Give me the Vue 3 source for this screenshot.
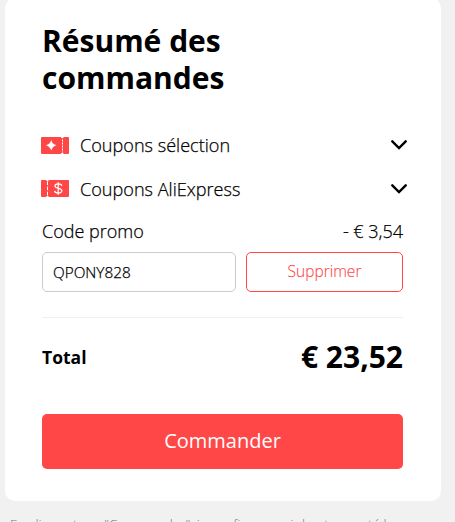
<template>
  <div class="page">
    <section class="summary">
      <h2 class="title">Résumé des commandes</h2>

      <div class="coupon" v-for="coupon in coupons" :key="coupon.id">
        <svg v-if="coupon.id === 'selection'" class="ticket" viewBox="0 0 28 17">
          <path
            class="ticket-body"
            d="M1 0H20a1.3 1.3 0 0 0 2.6 0H27a1 1 0 0 1 1 1V16a1 1 0 0 1-1 1H22.600a1.3 1.3 0 0 0-2.6 0H1a1 1 0 0 1-1-1V1a1 1 0 0 1 1-1z"
          />
          <path class="ticket-cut" d="M21.500 2.500V15.500" />
          <path
            class="ticket-star"
            d="M10.200 3Q11.300 7.200 15.500 8.300Q11.300 9.400 10.200 13.600Q9.100 9.400 4.900 8.300Q9.100 7.200 10.200 3z"
          />
        </svg>
        <svg v-else class="ticket raised" viewBox="0 0 28 17">
          <path
            class="ticket-body"
            d="M1 0H5.300a1.200 1.200 0 0 0 2.400 0H27a1 1 0 0 1 1 1V16a1 1 0 0 1-1 1H7.700a1.200 1.200 0 0 0-2.400 0H1a1 1 0 0 1-1-1V1a1 1 0 0 1 1-1z"
          />
          <path class="ticket-cut long" d="M6.500 1.500V16" />
          <path
            class="ticket-dollar"
            d="M17.200 2.300V14.700M20.700 5.800C20.300 3.400 14 3.200 14 6.100C14 9.100 20.900 7.500 20.900 10.800C20.900 13.900 13.900 13.700 13.600 10.900"
          />
        </svg>
        <span class="coupon-name">{{ coupon.name }}</span>
        <svg class="arrow" :class="{ open: opened === coupon.id }" viewBox="0 0 16 10" @click="toggle(coupon.id)">
          <path d="M1.300 1.300L8 8L14.700 1.300" />
        </svg>
      </div>

      <div class="promo-line">
        <span>Code promo</span>
        <span>- € 3,54</span>
      </div>
      <div class="promo-form">
        <input type="text" v-model="code" />
        <button class="remove" @click="code = ''">Supprimer</button>
      </div>

      <div class="total">
        <span class="total-label">Total</span>
        <span class="total-price">€ 23,52</span>
      </div>
      <button class="order">Commander</button>
    </section>
    <p class="terms">En cliquant sur "Commander", je confirme avoir lu et accepté les</p>
  </div>
</template>

<script setup>
import { ref } from "vue";

const coupons = [
  { id: "selection", name: "Coupons sélection" },
  { id: "aliexpress", name: "Coupons AliExpress" },
];
const code = ref("QPONY828");
const opened = ref(null);

const toggle = (id) => {
  opened.value = opened.value === id ? null : id;
};
</script>

<style>
body {
  background: #f1f1f1;
  overflow: hidden;
}
</style>

<style scoped>
.page {
  box-sizing: border-box;
  height: 522px;
  padding: 0 14px 0 5px;
  overflow: hidden;
  background: #f1f1f1;
  color: #000;
  font-family: "Open Sans", sans-serif;
  font-weight: 300;
}
.summary {
  box-sizing: border-box;
  height: 503px;
  margin-top: -2px;
  padding: 24px 38px 0 37px;
  background: #fff;
  border-radius: 10px;
}
.title {
  width: 240px;
  margin: 0 0 27px;
  font-size: 30px;
  font-weight: 700;
  line-height: 37px;
}
.coupon {
  display: flex;
  align-items: center;
  height: 44px;
  margin: 0 -4px 0 -1px;
  font-size: 18.1px;
}
.coupon-name,
.promo-line,
input,
.remove {
  -webkit-text-stroke: 0.25px currentColor;
}
.remove {
  -webkit-text-stroke-width: 0.15px;
}
.ticket {
  width: 28px;
  height: 17px;
  margin-right: 11px;
}
.ticket.raised {
  margin-bottom: 2px;
}
.ticket-body {
  fill: #ff4747;
}
.ticket-cut {
  fill: none;
  stroke: #fff;
  stroke-width: 1;
  stroke-dasharray: 2 1;
}
.ticket-cut.long {
  stroke-dasharray: 3.6 1.5;
}
.ticket-star {
  fill: #fff;
}
.ticket-dollar {
  fill: none;
  stroke: #fff;
  stroke-width: 1.2;
}
.coupon-name {
  flex-grow: 1;
}
.arrow {
  width: 16px;
  height: 10px;
  cursor: pointer;
}
.arrow.open {
  transform: rotate(180deg);
}
.arrow path {
  fill: none;
  stroke: #000;
  stroke-width: 2.4;
  stroke-linecap: round;
}
.promo-line {
  display: flex;
  justify-content: space-between;
  height: 41px;
  font-size: 18px;
  line-height: 41px;
}
.promo-form {
  display: flex;
  gap: 10px;
}
input,
button {
  box-sizing: border-box;
  margin: 0;
  font-family: inherit;
  font-weight: 300;
}
input {
  width: 194px;
  height: 40px;
  padding: 0 10px;
  border: 1px solid #ccc;
  border-radius: 5px;
  color: #000;
  font-size: 15.3px;
  outline: none;
}
.remove {
  flex-grow: 1;
  padding: 0 0 2px;
  border: 1px solid #ff4747;
  border-radius: 5px;
  background: #fff;
  color: #ff4747;
  font-size: 15.5px;
}
.total {
  display: flex;
  align-items: center;
  justify-content: space-between;
  height: 77px;
  margin-top: 25px;
  border-top: 1px solid #f0f0f0;
  font-weight: 700;
}
.total-label {
  font-size: 17.5px;
}
.total-price {
  font-size: 30px;
}
.order {
  width: 100%;
  height: 55px;
  margin-top: 19px;
  padding: 0 0 2px;
  border: none;
  border-radius: 5px;
  background: #ff4747;
  color: #fff;
  font-size: 20px;
  font-weight: 400;
}
.terms {
  margin: 13px 0 0 5px;
  color: #777;
  font-size: 13.6px;
  line-height: 20px;
  white-space: nowrap;
}
</style>
